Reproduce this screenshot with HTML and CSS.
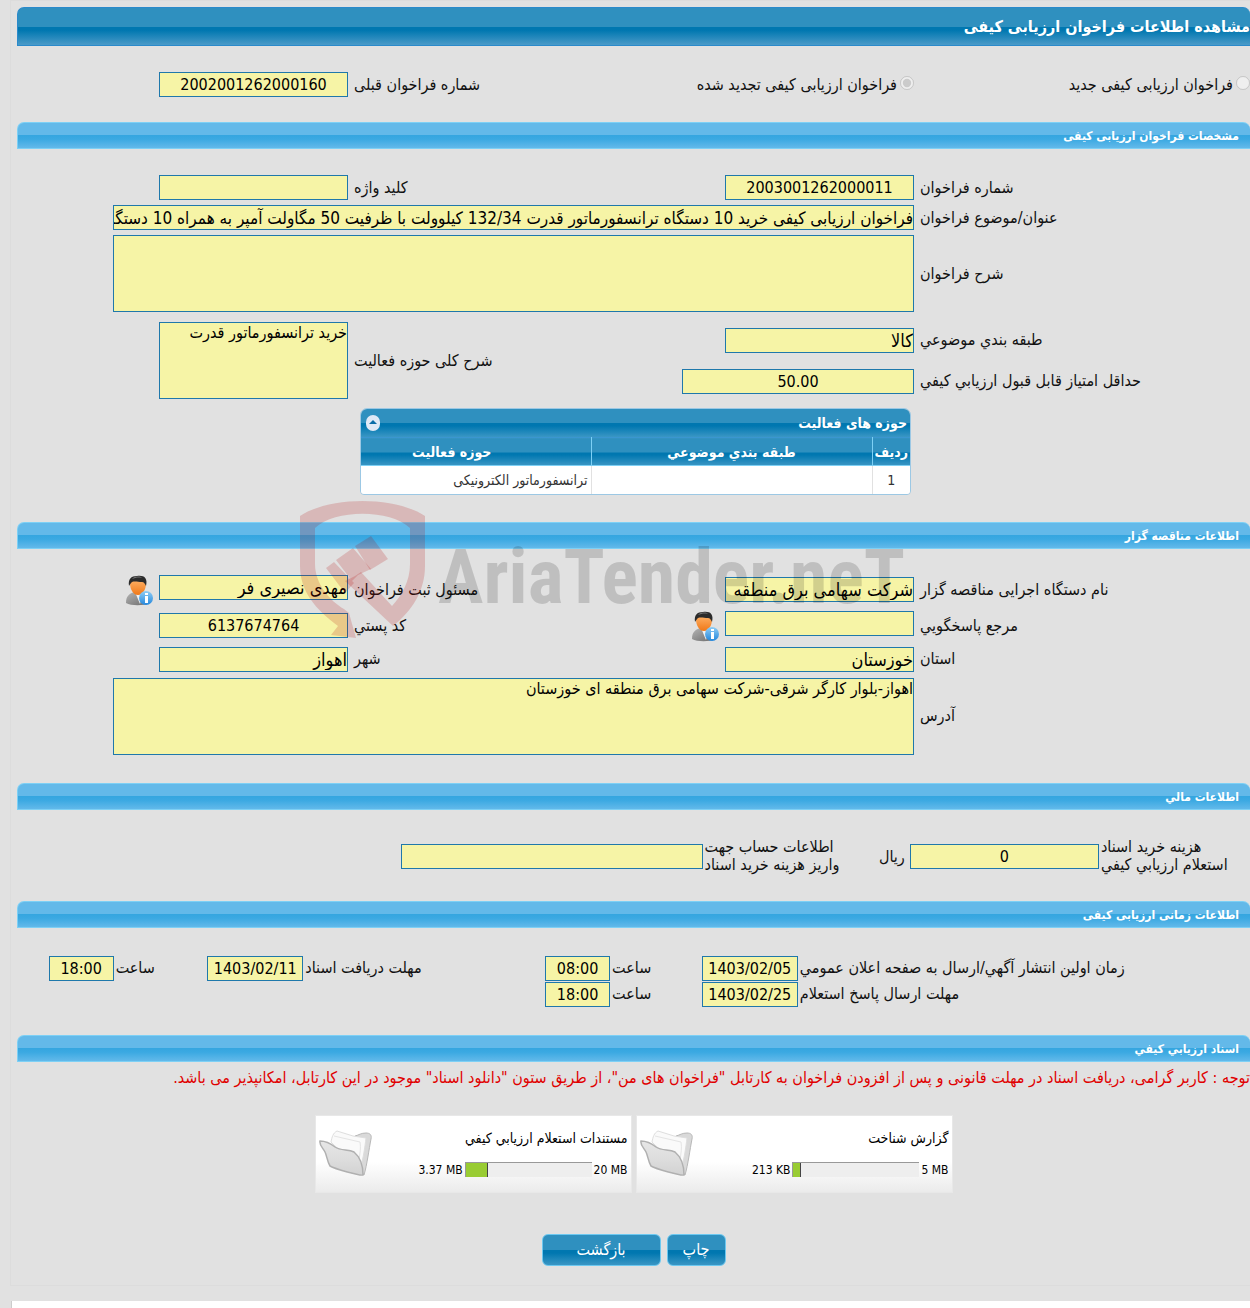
FILE: index.html
```html
<!DOCTYPE html>
<html lang="fa" dir="rtl">
<head>
    <meta charset="UTF-8">
    <meta name="viewport" content="width=device-width, initial-scale=1.0">
    <title>مشاهده اطلاعات فراخوان ارزیابی کیفی</title>
    <link rel="stylesheet" href="styles.css">
</head>
<body>
    <!-- Shared icons -->
    <svg class="defs" width="0" height="0" aria-hidden="true">
        <defs>
            <linearGradient id="skin" x1="0" y1="0" x2="0" y2="1"><stop offset="0" stop-color="#ffb56b"/><stop offset="1" stop-color="#f07818"/></linearGradient>
            <linearGradient id="suit" x1="0" y1="0" x2="1" y2="1"><stop offset="0" stop-color="#b5b5b5"/><stop offset="1" stop-color="#6a6a6a"/></linearGradient>
            <linearGradient id="badge" x1="0" y1="0" x2="0" y2="1"><stop offset="0" stop-color="#8fcdf5"/><stop offset="1" stop-color="#2487dc"/></linearGradient>
            <linearGradient id="folder-front" x1="0" y1="0" x2="0" y2="1"><stop offset="0" stop-color="#e6e6e6"/><stop offset="0.5" stop-color="#dedede"/><stop offset="1" stop-color="#d2d2d2"/></linearGradient>
        </defs>
        <symbol id="icon-user" viewBox="0 0 28 31">
            <path d="M1 28c0-7 3-9 8-11h8c5 2 7 4 7 11-5 3-18 3-23 0z" fill="url(#suit)"/>
            <path d="M10 17l5 12 3-12z" fill="#f2f2f2"/>
            <path d="M5 8c0-6 16-6 16 0 0 6-3 12-8 12S5 14 5 8z" fill="url(#skin)"/>
            <path d="M4 11C3 4 6 1 12 1c7-1 11 2 9 10-1-2-2-4-4-4-4 0-7-1-10 0-1 1-2 2-3 4z" fill="#2b2b2b"/>
            <path d="M7 4c3-3 8-3 10-1-4-1-7 0-10 1z" fill="#777"/>
            <circle cx="21" cy="23" r="7" fill="url(#badge)"/>
            <path d="M20 18h3v2h-3zM20 21h3v7h-3z" fill="#fff"/>
        </symbol>
        <symbol id="icon-folder" viewBox="0 0 54 48">
            <path d="M36 6c4-1 6-3 11-3 4 0 6 2 5 6-2 10-4 26-7 36l-6-8z" fill="#d9d9d9" stroke="#b8b8b8"/>
            <path d="M12 12c1-5 2-9 6-11l16 5 13 2c-1 9-3 21-5 28-8-7-22-15-30-24z" fill="#fafafa" stroke="#dedede"/>
            <path d="M15 6l26 6c1 6 0 11-1 18" fill="none" stroke="#e4e4e4"/>
            <path d="M1 11c5 0 10 2 15 6 6 4 13 2 19 5 6 5 9 13 9 23-3 1-28-6-33-9-3-5-3-10-5-14C4 18 0 15 1 11z" fill="url(#folder-front)" stroke="#b0b0b0" stroke-width="1.5"/>
        </symbol>
    </svg>

    <main class="panel">
        <h1 class="page-title">مشاهده اطلاعات فراخوان ارزیابی کیفی</h1>

        <div class="form-grid kind-row">
            <div class="radio-group">
                <input type="radio" id="kindNew" name="kind" disabled>
                <label for="kindNew">فراخوان ارزیابی کیفی جدید</label>
            </div>
            <div class="radio-group">
                <input type="radio" id="kindRenewed" name="kind" checked disabled>
                <label for="kindRenewed">فراخوان ارزیابی کیفی تجدید شده</label>
            </div>
            <label class="label" for="prevNumber">شماره فراخوان قبلی</label>
            <input class="field number" type="text" id="prevNumber" value="2002001262000160" readonly>
        </div>

        <!-- مشخصات فراخوان -->
        <section>
            <h2 class="section-title">مشخصات فراخوان ارزیابی کیفی</h2>
            <div class="section-body call-info">
                <div class="form-grid">
                    <label class="label" for="callNumber">شماره فراخوان</label>
                    <input class="field number" type="text" id="callNumber" value="2003001262000011" readonly>
                    <label class="label" for="keyword">کلید واژه</label>
                    <input class="field" type="text" id="keyword" readonly>

                    <label class="label" for="subject">عنوان/موضوع فراخوان</label>
                    <input class="field wide" type="text" id="subject" value="فراخوان ارزیابی کیفی خرید 10 دستگاه ترانسفورماتور قدرت 132/34 کیلوولت با ظرفیت 50 مگاولت آمپر به همراه 10 دستگاه ترانسفورماتور" readonly>

                    <label class="label" for="description">شرح فراخوان</label>
                    <textarea class="field wide" id="description" readonly></textarea>
                </div>

                <div class="form-grid activity">
                    <label class="label" for="category">طبقه بندي موضوعي</label>
                    <input class="field" type="text" id="category" value="کالا" readonly>
                    <label class="label two-rows" for="activityDesc">شرح کلی حوزه فعالیت</label>
                    <textarea class="field two-rows" id="activityDesc" readonly>خرید ترانسفورماتور قدرت</textarea>
                    <label class="label" for="minScore">حداقل امتیاز قابل قبول ارزيابي کيفي</label>
                    <input class="field number score" type="text" id="minScore" value="50.00" readonly>
                </div>

                <div class="form-grid">
                    <div class="data-table">
                        <div class="table-header">
                            <span>حوزه های فعالیت</span>
                            <button type="button" class="collapse" aria-label="بستن">
                                <svg width="16" height="16" viewBox="0 0 16 16"><rect x="1" y="0" width="14" height="16" rx="7" fill="#dfe9f6"/><path d="M4 9h8L8 5z" fill="#0a6da8"/></svg>
                            </button>
                        </div>
                        <table>
                            <thead>
                                <tr>
                                    <th class="col-index">ردیف</th>
                                    <th class="col-category">طبقه بندي موضوعي</th>
                                    <th class="col-activity">حوزه فعالیت</th>
                                </tr>
                            </thead>
                            <tbody>
                                <tr>
                                    <td class="center">1</td>
                                    <td></td>
                                    <td>ترانسفورماتور الکترونیکی</td>
                                </tr>
                            </tbody>
                        </table>
                    </div>
                </div>
            </div>
        </section>

        <!-- اطلاعات مناقصه گزار -->
        <section>
            <h2 class="section-title">اطلاعات مناقصه گزار</h2>
            <div class="section-body org-info">
                <div class="form-grid">
                    <label class="label" for="org">نام دستگاه اجرایی مناقصه گزار</label>
                    <input class="field" type="text" id="org" value="شرکت سهامی برق منطقه" readonly>
                    <label class="label" for="registrar">مسئول ثبت فراخوان</label>
                    <div class="with-icon">
                        <input class="field" type="text" id="registrar" value="مهدی نصیری فر" readonly>
                        <svg width="28" height="31" aria-hidden="true"><use href="#icon-user"/></svg>
                    </div>

                    <label class="label" for="contact">مرجع پاسخگويي</label>
                    <div class="with-icon">
                        <input class="field" type="text" id="contact" readonly>
                        <svg width="28" height="31" aria-hidden="true"><use href="#icon-user"/></svg>
                    </div>
                    <label class="label" for="postal">کد پستي</label>
                    <input class="field number" type="text" id="postal" value="6137674764" readonly>

                    <label class="label" for="province">استان</label>
                    <input class="field" type="text" id="province" value="خوزستان" readonly>
                    <label class="label" for="city">شهر</label>
                    <input class="field" type="text" id="city" value="اهواز" readonly>

                    <label class="label" for="address">آدرس</label>
                    <textarea class="field wide" id="address" readonly>اهواز-بلوار کارگر شرقی-شرکت سهامی برق منطقه ای خوزستان</textarea>
                </div>
            </div>
        </section>

        <!-- اطلاعات مالی -->
        <section>
            <h2 class="section-title">اطلاعات مالي</h2>
            <div class="section-body finance">
                <label class="label" for="cost">هزینه خرید اسناد<br>استعلام ارزيابي کيفي</label>
                <input class="field number" type="text" id="cost" value="0" readonly>
                <span class="unit">ریال</span>
                <label class="label" for="account">اطلاعات حساب جهت<br>واریز هزینه خرید اسناد</label>
                <input class="field account" type="text" id="account" readonly>
            </div>
        </section>

        <!-- اطلاعات زمانی -->
        <section>
            <h2 class="section-title">اطلاعات زمانی ارزیابی کیفی</h2>
            <div class="section-body schedule">
                <label class="label" for="publishDate">زمان اولين انتشار آگهي/ارسال به صفحه اعلان عمومي</label>
                <input class="field number date" type="text" id="publishDate" value="1403/02/05" readonly>
                <label class="label" for="publishTime">ساعت</label>
                <input class="field number time" type="text" id="publishTime" value="08:00" readonly>
                <label class="label" for="receiveDate">مهلت دریافت اسناد</label>
                <input class="field number date" type="text" id="receiveDate" value="1403/02/11" readonly>
                <label class="label" for="receiveTime">ساعت</label>
                <input class="field number time" type="text" id="receiveTime" value="18:00" readonly>

                <label class="label" for="replyDate">مهلت ارسال پاسخ استعلام</label>
                <input class="field number date" type="text" id="replyDate" value="1403/02/25" readonly>
                <label class="label" for="replyTime">ساعت</label>
                <input class="field number time" type="text" id="replyTime" value="18:00" readonly>
            </div>
        </section>

        <!-- اسناد -->
        <section>
            <h2 class="section-title">اسناد ارزيابي کيفي</h2>
            <p class="notice">توجه : کاربر گرامی، دریافت اسناد در مهلت قانونی و پس از افزودن فراخوان به کارتابل "فراخوان های من"، از طریق ستون "دانلود اسناد" موجود در این کارتابل، امکانپذیر می باشد.</p>
            <div class="files">
                <div class="file-card">
                    <svg width="54" height="48" aria-hidden="true"><use href="#icon-folder"/></svg>
                    <div class="file-info">
                        <div class="file-name">گزارش شناخت</div>
                        <div class="usage">
                            <span>213 KB</span>
                            <div class="bar"><div class="fill" style="width: 6%"></div></div>
                            <span>5 MB</span>
                        </div>
                    </div>
                </div>
                <div class="file-card">
                    <svg width="54" height="48" aria-hidden="true"><use href="#icon-folder"/></svg>
                    <div class="file-info">
                        <div class="file-name">مستندات استعلام ارزيابي کيفي</div>
                        <div class="usage">
                            <span>3.37 MB</span>
                            <div class="bar"><div class="fill" style="width: 18%"></div></div>
                            <span>20 MB</span>
                        </div>
                    </div>
                </div>
            </div>
        </section>

        <div class="actions">
            <button type="button" class="btn">چاپ</button>
            <button type="button" class="btn btn-back">بازگشت</button>
        </div>

        <!-- Watermark -->
        <svg class="watermark" width="610" height="144" viewBox="0 0 610 144" direction="ltr" aria-hidden="true">
            <g fill="#b40000" fill-opacity="0.18">
                <path d="M0 17C30-3 95-3 125 17V67C125 92 112 112 93 127L45 82 55 77 61 73 92 107C102 96 110 82 110 65V29C90 10 35 10 15 29V65C15 85 30 102 44 110L49 114 56 139 31 136 38 127C15 110 0 92 0 67z"/>
                <path d="M26 69L34 63 54 84 45 94zM36 61L53 49 71 70 58 76 52 82z"/>
                <path d="M55 47L71 37 88 60 70 71z"/>
            </g>
            <text x="138" y="104" class="watermark-text">AriaTender.neT</text>
        </svg>
    </main>

    <footer class="footer"></footer>
</body>
</html>
```

FILE: styles.css
```css
* {
    box-sizing: border-box;
}

body {
    font-family: Tahoma, 'DejaVu Sans Condensed', 'DejaVu Sans', sans-serif;
    font-size: 16px;
    background-color: #e1e1e1;
    color: #111;
    margin: 0;
    min-height: 100vh;
    display: flex;
    flex-direction: column;
}

.defs {
    position: absolute;
}

.panel {
    position: relative;
    margin-left: 10px;
    padding: 6px 0 19px 6px;
    border: 1px solid #dcdcdc;
    border-right: 0;
    overflow: hidden;
}

.page-title {
    margin: 0;
    height: 39px;
    line-height: 37px;
    font-size: 16px;
    color: #fff;
    border: 1px solid #2a8acb;
    border-right: 0;
    border-radius: 7px 7px 0 0;
    background: linear-gradient(#2f90bf 50%, #0077b0 51%, #0077b0 60%, #4a9ac8);
}

.section-title {
    margin: 0;
    height: 27px;
    padding: 0 11px;
    line-height: 27px;
    font-size: 12px;
    color: #fff;
    border: 1px solid #7dd0f5;
    border-right: 0;
    border-radius: 7px 7px 0 0;
    background: linear-gradient(#63b9e9 49%, #35a6e0 50%, #3ba9e2 65%, #62b9ea);
}

.section-body {
    padding: 26px 0 28px;
}

/* label / field / label / field */
.form-grid {
    display: grid;
    grid-template-columns: 330fr 291fr 263fr 331fr;
    gap: 5px 6px;
    align-items: center;
}

.kind-row {
    padding: 26px 0 25px;
}

.call-info {
    padding-bottom: 27px;
}

.activity {
    margin: 10px 0 9px;
    grid-template-rows: 36px 36px;
}

.org-info .form-grid {
    row-gap: 6px;
}

.label {
    text-align: left;
    line-height: 18px;
}

.radio-group {
    display: flex;
    align-items: center;
    gap: 3px;
    white-space: nowrap;
}

.radio-group input {
    width: 14px;
    height: 14px;
    margin: 0 0 4px;
}

.field {
    width: 189px;
    height: 25px;
    padding: 0;
    font-family: inherit;
    font-size: 18px;
    color: #000;
    background-color: #f6f4a6;
    border: 1px solid #1f78ab;
    border-radius: 0;
}

.field.wide {
    grid-column: 2 / 5;
    width: 801px;
    max-width: 100%;
    font-size: 17px;
}

textarea.field,
textarea.field.wide {
    display: block;
    height: 77px;
    font-size: 16px;
    line-height: 20px;
    resize: none;
}

.field.score {
    width: 232px;
}

.field.number {
    font-size: 16px;
    text-align: center;
    direction: ltr;
}

.two-rows {
    grid-row: 1 / 3;
}

.label.two-rows {
    grid-column: 3;
}

.field.two-rows {
    grid-column: 4;
}

.with-icon {
    display: flex;
    align-items: flex-start;
    gap: 6px;
    height: 30px;
}

.with-icon svg {
    flex: none;
}

.data-table {
    grid-column: 2 / 4;
    width: 551px;
    margin-right: 3px;
    border: 1px solid #9cc8e4;
    border-radius: 7px 7px 4px 4px;
    overflow: hidden;
    font-size: 14px;
    color: #333;
}

.table-header,
.data-table th,
.btn {
    color: #fff;
    background: linear-gradient(#2f90bf 50%, #0077b0 51%, #0077b0 60%, #3a96c4);
}

.table-header {
    display: flex;
    justify-content: space-between;
    align-items: center;
    height: 28px;
    padding: 0 3px 0 4px;
    font-weight: bold;
}

.collapse {
    display: flex;
    padding: 0;
    border: 0;
    background: none;
    cursor: pointer;
}

.data-table table {
    width: 100%;
    table-layout: fixed;
    border-collapse: collapse;
}

.data-table th {
    height: 28px;
    padding: 0;
    border-top: 1px solid #3a96d0;
    border-bottom: 1px solid #7dd0f5;
    border-left: 1px solid #7dd0f5;
}

.data-table td {
    height: 28px;
    padding: 0 3px;
    background: #fff;
    border-left: 1px solid #e1e1e1;
}

.data-table tr > :last-child {
    border-left: 0;
}

.col-index {
    width: 38px;
}

.col-category {
    width: 281px;
}

.data-table .col-activity {
    padding-right: 48px;
}

.center {
    text-align: center;
}

.finance {
    display: grid;
    grid-template-columns: 149fr 189fr 39fr 162fr 685fr;
    column-gap: 2px;
    align-items: center;
    min-height: 91px;
    padding: 28px 0 26px;
}

.finance .field {
    width: 100%;
}

.finance .field.account {
    width: 302px;
}

.unit {
    padding-right: 3px;
}

.schedule {
    display: grid;
    grid-template-columns: 452fr 96fr 88fr 66fr 238fr 96fr 90fr 97fr;
    gap: 1px 2px;
    align-items: center;
    padding: 28px 0;
}

.field.date {
    width: 96px;
}

.field.time {
    width: 65px;
}

.notice {
    margin: 0;
    padding: 5px 0;
    line-height: 22px;
    color: #e00000;
    white-space: nowrap;
}

.files {
    display: flex;
    justify-content: center;
    gap: 4px;
    margin: 21px 0 41px;
}

.file-card {
    display: flex;
    flex-direction: row-reverse;
    align-items: center;
    justify-content: space-between;
    width: 317px;
    height: 78px;
    padding: 0 3px;
    font-size: 12px;
    color: #000;
    background: linear-gradient(#fff 60%, #ebebeb);
    border: 1px solid #e8e8e8;
}

.file-info {
    line-height: 18px;
}

.file-name {
    font-size: 14px;
}

.usage {
    display: flex;
    direction: ltr;
    justify-content: flex-end;
    align-items: center;
    gap: 2px;
    margin-top: 14px;
}

.bar {
    width: 127px;
    height: 15px;
    background: #eee;
    border-top: 1px solid #999;
    border-left: 1px solid #999;
}

.fill {
    height: 100%;
    background: #9c3;
    border-right: 1px solid #444;
}

.actions {
    display: flex;
    justify-content: center;
    gap: 6px;
}

.btn {
    height: 32px;
    min-width: 59px;
    font-family: inherit;
    font-size: 16px;
    border: 1px solid #6cc8f0;
    border-radius: 6px;
    cursor: pointer;
}

.btn-back {
    min-width: 119px;
}

/* lies over the form */
.watermark {
    position: absolute;
    left: 289px;
    top: 498px;
    pointer-events: none;
}

.watermark-text {
    font: bold 76px 'Liberation Sans Narrow', 'Roboto Condensed', 'Open Sans Condensed', Roboto, sans-serif;
    fill: #000;
    fill-opacity: 0.15;
}

.footer {
    flex: 1;
    min-height: 7px;
    margin: 15px 0 0 11px;
    background: #fff;
    border-left: 1px solid #ccc;
}
```
